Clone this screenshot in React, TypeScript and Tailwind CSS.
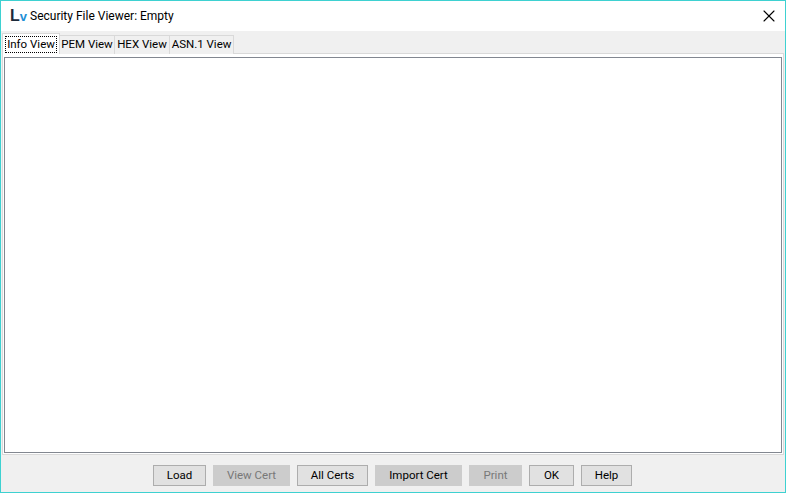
import { X } from "lucide-react"

const tabs = [
  { label: "Info View", width: "w-[58px]" },
  { label: "PEM View", width: "w-[55px]" },
  { label: "HEX View", width: "w-[55px]" },
  { label: "ASN.1 View", width: "w-[64px]" },
]

const buttons = [
  { label: "Load", width: "w-[53px]", state: "normal" },
  { label: "View Cert", width: "w-[77px]", state: "disabled" },
  { label: "All Certs", width: "w-[71px]", state: "normal" },
  { label: "Import Cert", width: "w-[87px]", state: "pressed" },
  { label: "Print", width: "w-[53px]", state: "disabled" },
  { label: "OK", width: "w-[45px]", state: "normal" },
  { label: "Help", width: "w-[51px]", state: "normal" },
]

const stateClass: Record<string, string> = {
  normal: "bg-[#e1e1e1] border-[#adadad] text-black",
  disabled: "bg-[#cccccc] border-[#cccccc] text-[#787878]",
  pressed: "bg-[#cccccc] border-[#cccccc] text-black",
}

export default function App() {
  return (
    <div className="w-[786px] h-[493px] flex flex-col overflow-hidden border border-[#3ed1d1] bg-[#f0f0f0] font-['Roboto',sans-serif] text-[11.5px] text-black">
      <div className="h-[30px] shrink-0 bg-white flex items-center pl-[9px] pr-[6px]">
        <span className="w-[20px] flex items-baseline font-['Liberation_Sans',sans-serif] font-bold leading-none">
          <span className="text-[#1b2a3a] text-[16px]">L</span>
          <span className="text-[#1e8fd6] text-[13px]">v</span>
        </span>
        <span className="text-[12px]">Security File Viewer: Empty</span>
        <X className="ml-auto" size={20} strokeWidth={1.3} />
      </div>

      <div className="flex-1 flex flex-col pt-[2px] px-[1px]">
        <div className="flex items-end h-[21px] relative z-10">
          {tabs.map((tab, i) =>
            i === 0 ? (
              <div key={tab.label} className={`${tab.width} h-[21px] bg-white border border-b-0 border-[#d9d9d9] pt-[2px] px-[2px] pb-[1px]`}>
                <div className="h-full border border-dotted border-black flex items-center justify-center leading-none whitespace-nowrap">
                  {tab.label}
                </div>
              </div>
            ) : (
              <div
                key={tab.label}
                className={`${tab.width} h-[19px] bg-[#f0f0f0] border border-l-0 border-b-0 border-[#d9d9d9] flex items-center justify-center leading-none whitespace-nowrap`}
              >
                {tab.label}
              </div>
            ),
          )}
        </div>

        <div className="h-[402px] shrink-0 border border-[#d9d9d9] bg-white pt-[3px] px-[1px] pb-[1px] -mt-[1px]">
          <div className="h-full border border-[#828790] bg-white" />
        </div>

        <div className="flex-1 flex items-start justify-center gap-[7px] pt-[10px] pr-[1px]">
          {buttons.map((b) => (
            <button
              key={b.label}
              className={`${b.width} h-[21px] border flex items-center justify-center leading-none ${stateClass[b.state]}`}
            >
              {b.label}
            </button>
          ))}
        </div>
      </div>
    </div>
  )
}
